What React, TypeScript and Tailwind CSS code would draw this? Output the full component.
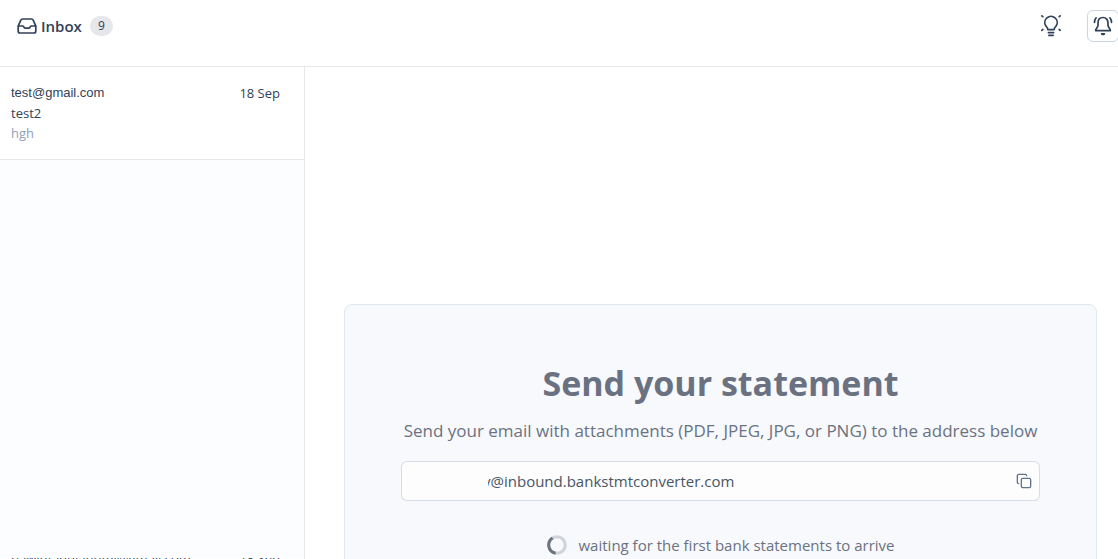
import React from "react";
import { Copy } from "lucide-react";

function InboxIcon() {
  return (
    <svg width="20" height="16" viewBox="0 0 20 16" fill="none" stroke="currentColor" strokeWidth="1.7" strokeLinejoin="round" strokeLinecap="round" aria-hidden="true">
      <path d="M1.2 8.2 3.8 2.2Q4.3 1 5.6 1H14.4Q15.7 1 16.2 2.2L18.8 8.2V13Q18.8 15 17 15H3Q1.2 15 1.2 13Z" />
      <path d="M1.4 8H5.6Q6.4 8 6.8 8.8L7.1 9.4Q7.5 10.2 8.4 10.2H11.6Q12.5 10.2 12.9 9.4L13.2 8.8Q13.6 8 14.4 8H18.6" />
    </svg>
  );
}

function BulbIcon() {
  return (
    <svg width="24" height="24" viewBox="0 0 24 24" fill="none" stroke="currentColor" strokeWidth="1.7" strokeLinecap="round" aria-hidden="true">
      <path d="M8.8 15.6C8.8 13.8 7.7 13 6.8 11.9A6.2 6.2 0 1 1 17.2 11.9C16.3 13 15.2 13.8 15.2 15.6Z" strokeLinejoin="round" />
      <path d="M9.4 18.6H14.6M9.9 21.4H14.1" />
      <path d="M2.8 1.9 3.8 2.7M21.2 1.9 20.2 2.7M2.8 16.3 3.8 15.5M21.2 16.3 20.2 15.5" />
    </svg>
  );
}

function BellIcon() {
  return (
    <svg width="20" height="20" viewBox="0 0 20 20" fill="none" stroke="currentColor" strokeWidth="1.7" strokeLinecap="round" strokeLinejoin="round" aria-hidden="true">
      <path d="M10 1.5C6.8 1.5 5 3.9 5 7V9.6C5 11.4 2.6 12.8 2.6 14.6H17.4C17.4 12.8 15 11.4 15 9.6V7C15 3.9 13.2 1.5 10 1.5Z" />
      <path d="M3.1 1.8Q1.6 3.6 1.5 6.4M16.9 1.8Q18.4 3.6 18.5 6.4" />
      <path d="M8.6 17.8Q10 19.2 11.4 17.8Z" />
    </svg>
  );
}

function Spinner() {
  return (
    <svg width="20" height="20" viewBox="0 0 20 20" fill="none" strokeWidth="3" role="img" aria-label="Loading">
      <circle cx="10" cy="10" r="8.3" stroke="#cfd3da" />
      <path d="M5.6 3A8.3 8.3 0 0 0 8.6 18.2" stroke="#6b7480" />
    </svg>
  );
}

export default function App() {
  return (
    <div className="flex h-screen flex-col overflow-hidden bg-white font-['Open_Sans','Noto_Sans',sans-serif] text-slate-700">
      <header className="flex h-[67px] shrink-0 items-start justify-between border-b border-gray-200 pl-[17px] pt-2.5">
        <div className="flex h-8 items-center">
          <InboxIcon />
          <h1 className="ml-1 text-[15px] font-semibold leading-5">Inbox</h1>
          <span className="ml-2 flex h-5 items-center rounded-full bg-gray-200 px-2 text-xs">9</span>
        </div>
        <div className="-mr-px flex items-center gap-6">
          <button type="button" aria-label="Tips" className="flex size-6 items-center justify-center">
            <BulbIcon />
          </button>
          <button type="button" aria-label="Notifications" className="flex size-8 items-center justify-center rounded-md border border-slate-300 bg-white">
            <BellIcon />
          </button>
        </div>
      </header>

      <div className="flex min-h-0 flex-1">
        <aside className="flex w-[305px] shrink-0 flex-col border-r border-gray-200 bg-[#fcfdff]">
          <article className="border-b border-gray-200 bg-white pb-4 pl-[11px] pr-6 pt-4 text-[13px] leading-5">
            <div className="flex justify-between">
              <span className="font-['Liberation_Sans',Arial,sans-serif]">test@gmail.com</span>
              <span>18 Sep</span>
            </div>
            <p>test2</p>
            <p className="text-slate-400">hgh</p>
          </article>
          <div className="flex-1" />
          <article className="flex h-px items-center justify-between overflow-hidden bg-white pl-[11px] pr-6 text-[13px]">
            <span>pawinfanuianumi@gmail.com</span>
            <span>18 Sep</span>
          </article>
        </aside>

        <main className="min-w-0 flex-1 overflow-hidden pl-[39px] pr-[21px] pt-[237px]">
          <section className="flex flex-col items-center rounded-lg border border-slate-200 bg-[#f8f9fd] px-14 pb-14 pt-14 text-gray-500">
            <h2 className="whitespace-nowrap text-[34px] font-bold leading-[44px]">Send your statement</h2>
            <p className="mt-3 whitespace-nowrap text-[17px] leading-7">
              Send your email with attachments (PDF, JPEG, JPG, or PNG) to the address below
            </p>
            <div className="mt-4 flex h-10 w-full items-center rounded-md border border-slate-300/80 bg-[#fdfdfd] pl-[86px] pr-[7px]">
              <input
                type="text"
                readOnly
                aria-label="Inbound email address"
                defaultValue="y@inbound.bankstmtconverter.com"
                className="min-w-0 flex-1 bg-transparent indent-[-5px] text-[15px] leading-6 text-gray-600 outline-none"
              />
              <button type="button" aria-label="Copy address" className="text-slate-500">
                <Copy size={16} strokeWidth={2} />
              </button>
            </div>
            <div className="mt-8 flex items-center gap-3 whitespace-nowrap text-[15px] leading-6">
              <Spinner />
              <span>waiting for the first bank statements to arrive</span>
            </div>
          </section>
        </main>
      </div>
    </div>
  );
}
